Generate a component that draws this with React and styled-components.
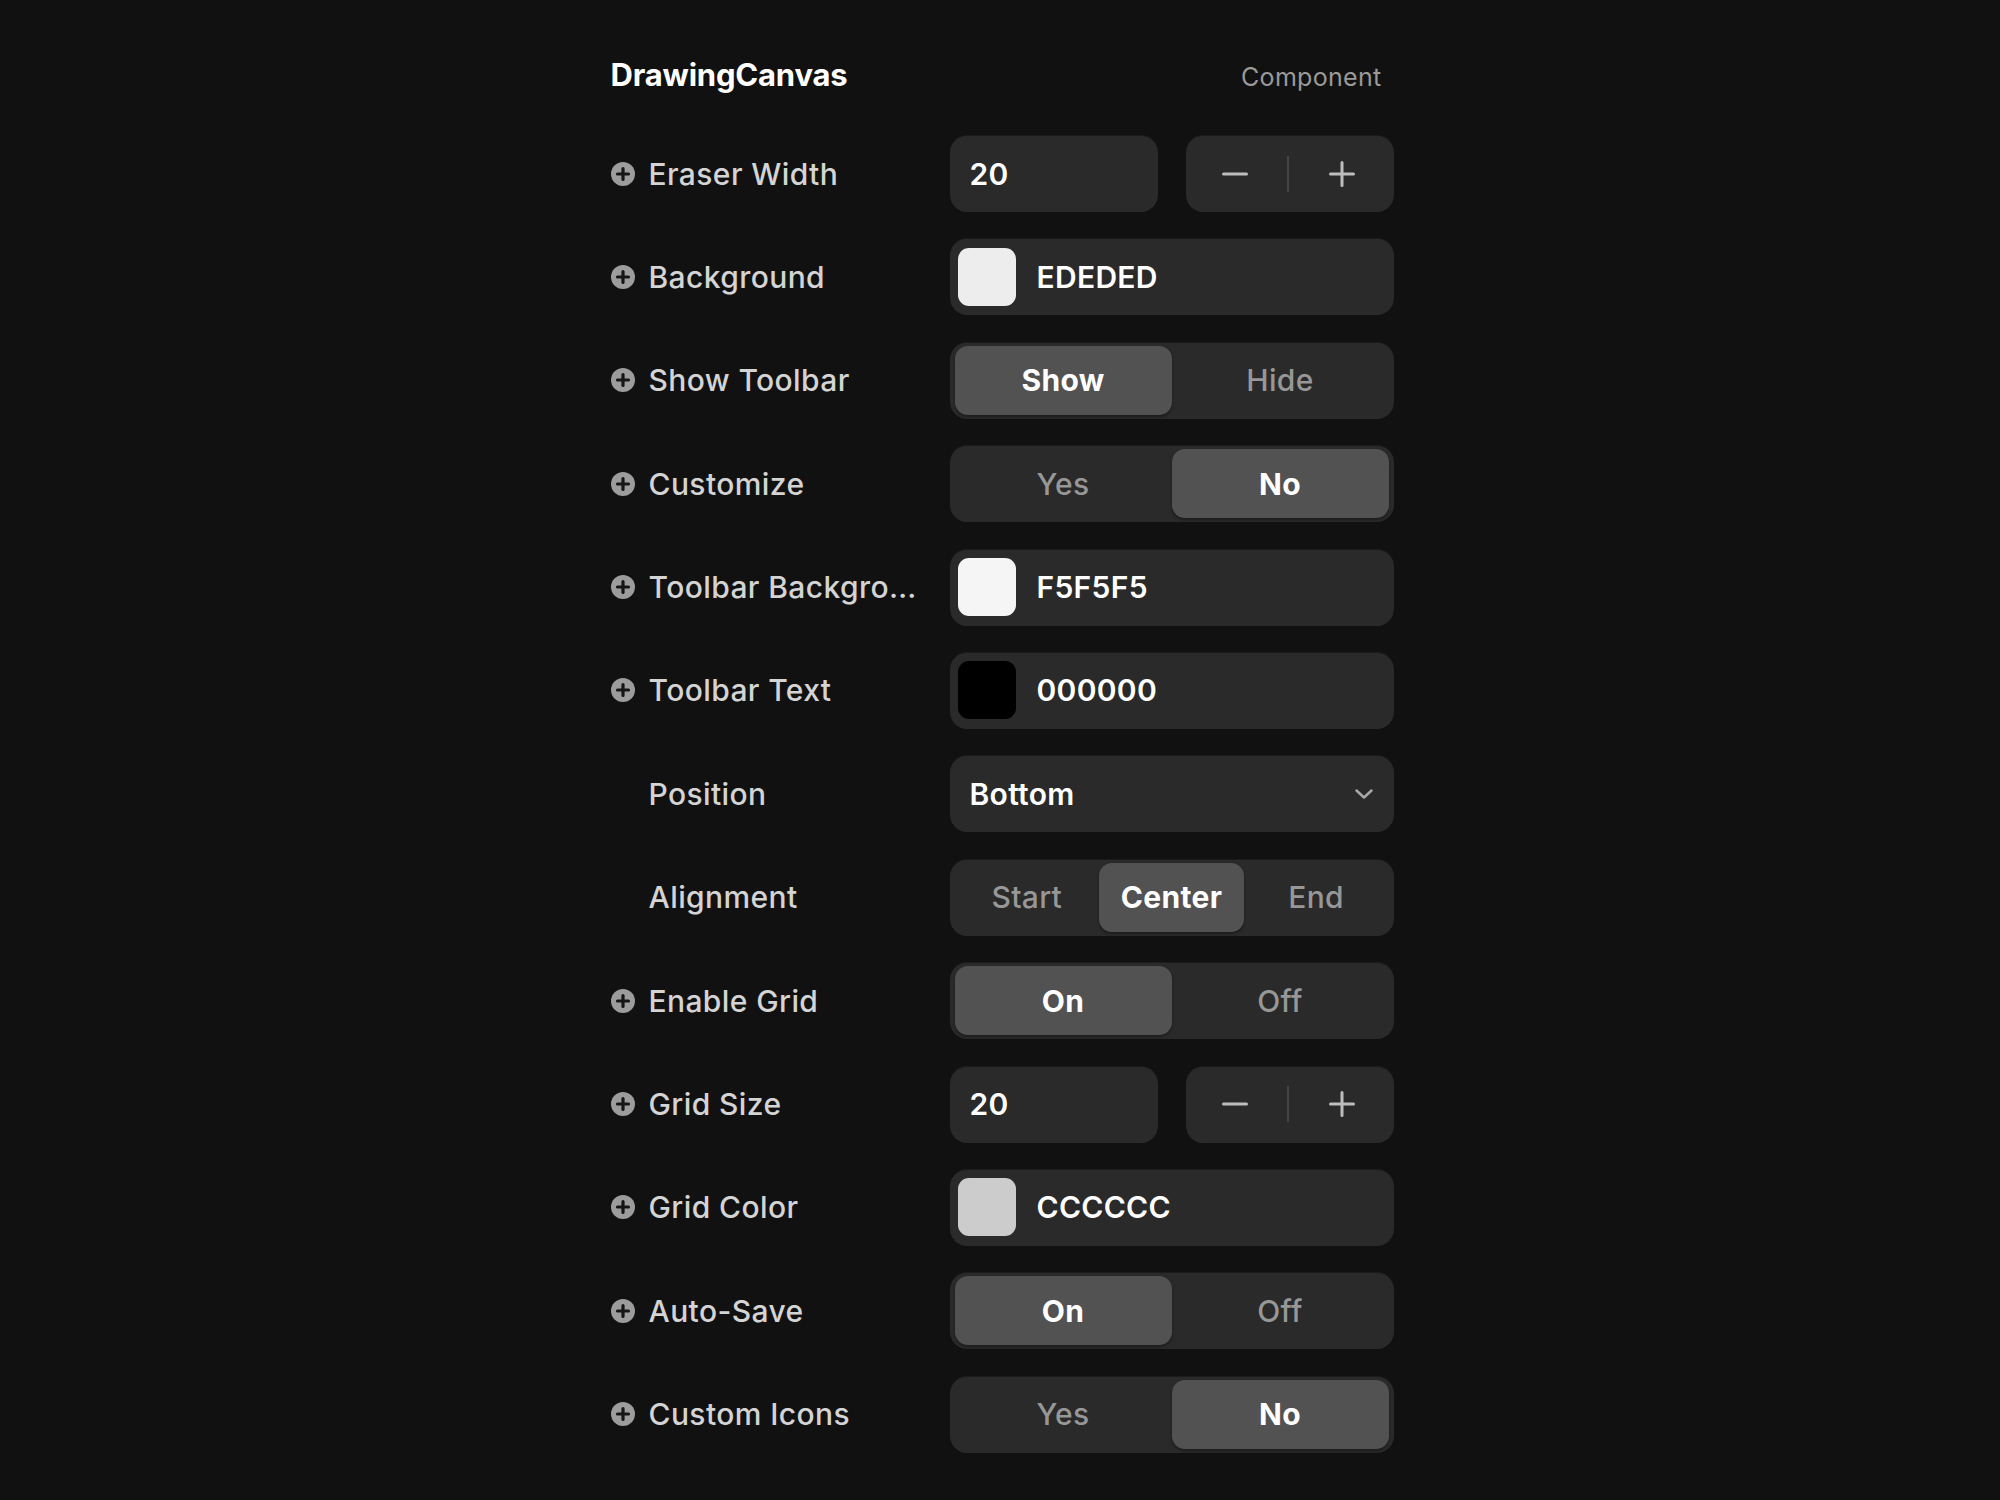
import React from 'react';
import styled, { createGlobalStyle } from 'styled-components';

const GlobalStyle = createGlobalStyle`
  html, body {
    margin: 0;
    padding: 0;
    background: #111111;
  }
  body {
    font-family: Inter, "Noto Sans", "Liberation Sans", sans-serif;
    -webkit-font-smoothing: antialiased;
  }
`;

const Page = styled.div`
  min-height: 1500px;
  background: #111111;
  display: flex;
  justify-content: center;
  padding-top: 56px;
  padding-left: 4px;
  box-sizing: border-box;
`;

const Panel = styled.div`
  width: 783px;
  display: flex;
  flex-direction: column;
`;

const Header = styled.div`
  display: flex;
  align-items: baseline;
  justify-content: space-between;
  height: 44px;
  margin-bottom: 35px;
  padding-right: 12px;
`;

const Title = styled.h1`
  margin: 0;
  font-size: 31px;
  font-weight: 700;
  color: #ffffff;
  letter-spacing: -0.2px;
`;

const Kind = styled.span`
  font-size: 25px;
  font-weight: 400;
  letter-spacing: 0.3px;
  color: #9a9a9a;
`;

const Rows = styled.div`
  display: flex;
  flex-direction: column;
  gap: 26.4px;
`;

const Row = styled.div`
  display: grid;
  grid-template-columns: 310px 1fr;
  column-gap: 29px;
  align-items: center;
  height: 77px;
`;

const Label = styled.div`
  display: flex;
  align-items: center;
  gap: 14px;
  min-width: 0;
`;

const IconSlot = styled.span`
  flex: none;
  width: 24px;
  height: 24px;
  display: flex;
  align-items: center;
  justify-content: center;
`;

const LabelText = styled.span`
  font-size: 30px;
  font-weight: 500;
  letter-spacing: 0.4px;
  color: #d4d4d4;
  white-space: nowrap;
  overflow: hidden;
  text-overflow: ellipsis;
  min-width: 0;
`;

const Box = styled.div`
  height: 77px;
  box-sizing: border-box;
  background: #2a2a2a;
  border-radius: 17px;
  box-shadow: inset 0 1px 0 rgba(0, 0, 0, 0.35);
  display: flex;
  align-items: center;
  font-size: 30px;
  letter-spacing: 0.3px;
`;

const Split = styled.div`
  display: grid;
  grid-template-columns: 1fr 1fr;
  gap: 28px;
`;

const NumberBox = styled(Box)`
  padding-left: 20px;
  font-weight: 600;
  color: #ffffff;
`;

const StepperBox = styled(Box)`
  justify-content: space-between;
  padding: 0 39px 0 36px;
`;

const Divider = styled.span`
  width: 2px;
  height: 36px;
  background: #444444;
`;

const ColorBox = styled(Box)`
  padding-left: 8px;
  gap: 21px;
  font-weight: 600;
  color: #ffffff;
`;

const Swatch = styled.span`
  width: 58px;
  height: 58px;
  border-radius: 11px;
  background: ${(p) => p.$color};
  flex: none;
`;

const SelectBox = styled(Box)`
  justify-content: space-between;
  padding: 0 20px 0 20px;
  font-weight: 600;
  color: #ffffff;
`;

const Segments = styled(Box)`
  display: grid;
  grid-template-columns: repeat(${(p) => p.$count}, 1fr);
  padding: 4px 5px;
  align-items: stretch;
`;

const Segment = styled.div`
  display: flex;
  align-items: center;
  justify-content: center;
  border-radius: 13px;
  font-weight: ${(p) => (p.$active ? 700 : 500)};
  color: ${(p) => (p.$active ? '#ffffff' : '#979797')};
  background: ${(p) => (p.$active ? '#525252' : 'transparent')};
  box-shadow: ${(p) => (p.$active ? '0 2px 3px rgba(0,0,0,0.35)' : 'none')};
`;

const PlusCircle = () => (
  <svg width="24" height="24" viewBox="0 0 24 24">
    <circle cx="12" cy="12" r="12" fill="#9c9c9c" />
    <path d="M12 6.5v11M6.5 12h11" stroke="#161616" strokeWidth="3.2" strokeLinecap="round" />
  </svg>
);

const Minus = () => (
  <svg width="26" height="26" viewBox="0 0 26 26">
    <path d="M1.5 13h23" stroke="#bdbdbd" strokeWidth="3" strokeLinecap="round" />
  </svg>
);

const Plus = () => (
  <svg width="26" height="26" viewBox="0 0 26 26">
    <path d="M1.5 13h23M13 1.5v23" stroke="#bdbdbd" strokeWidth="3" strokeLinecap="round" />
  </svg>
);

const Chevron = () => (
  <svg width="20" height="12" viewBox="0 0 20 12">
    <path d="M2.5 2.5l7.5 7 7.5-7" fill="none" stroke="#a8a8a8" strokeWidth="2.5" strokeLinecap="round" strokeLinejoin="round" />
  </svg>
);

const Stepper = ({ value }) => (
  <Split>
    <NumberBox>{value}</NumberBox>
    <StepperBox>
      <Minus />
      <Divider />
      <Plus />
    </StepperBox>
  </Split>
);

const ColorField = ({ color }) => (
  <ColorBox>
    <Swatch $color={'#' + color} />
    {color}
  </ColorBox>
);

const Choice = ({ options, active }) => (
  <Segments $count={options.length}>
    {options.map((o) => (
      <Segment key={o} $active={o === active}>
        {o}
      </Segment>
    ))}
  </Segments>
);

const Select = ({ value }) => (
  <SelectBox>
    {value}
    <Chevron />
  </SelectBox>
);

const rows = [
  { label: 'Eraser Width', icon: true, control: <Stepper value="20" /> },
  { label: 'Background', icon: true, control: <ColorField color="EDEDED" /> },
  { label: 'Show Toolbar', icon: true, control: <Choice options={['Show', 'Hide']} active="Show" /> },
  { label: 'Customize', icon: true, control: <Choice options={['Yes', 'No']} active="No" /> },
  { label: 'Toolbar Background', icon: true, control: <ColorField color="F5F5F5" /> },
  { label: 'Toolbar Text', icon: true, control: <ColorField color="000000" /> },
  { label: 'Position', icon: false, control: <Select value="Bottom" /> },
  { label: 'Alignment', icon: false, control: <Choice options={['Start', 'Center', 'End']} active="Center" /> },
  { label: 'Enable Grid', icon: true, control: <Choice options={['On', 'Off']} active="On" /> },
  { label: 'Grid Size', icon: true, control: <Stepper value="20" /> },
  { label: 'Grid Color', icon: true, control: <ColorField color="CCCCCC" /> },
  { label: 'Auto-Save', icon: true, control: <Choice options={['On', 'Off']} active="On" /> },
  { label: 'Custom Icons', icon: true, control: <Choice options={['Yes', 'No']} active="No" /> },
];

const App = () => {
  return (
    <>
      <GlobalStyle />
      <Page>
        <Panel>
          <Header>
            <Title>DrawingCanvas</Title>
            <Kind>Component</Kind>
          </Header>
          <Rows>
            {rows.map((r) => (
              <Row key={r.label}>
                <Label>
                  <IconSlot>{r.icon && <PlusCircle />}</IconSlot>
                  <LabelText>{r.label}</LabelText>
                </Label>
                {r.control}
              </Row>
            ))}
          </Rows>
        </Panel>
      </Page>
    </>
  );
};

export default App;
